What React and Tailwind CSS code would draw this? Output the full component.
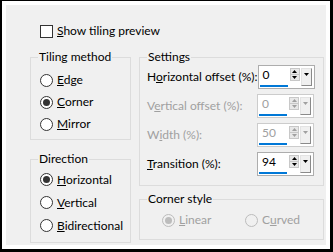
import React from "react";

const font = { fontFamily: 'Lato, "Noto Sans", sans-serif' };

function Radio({ checked, disabled }) {
  return (
    <span
      className={`flex items-center justify-center w-[13px] h-[13px] rounded-full border shrink-0 ${
        disabled ? "border-[#bcbcbc] bg-[#f0f0f0]" : "border-[#333333] bg-white"
      }`}
    >
      {checked && (
        <span
          className={`w-[7px] h-[7px] rounded-full ${disabled ? "bg-[#bcbcbc]" : "bg-[#333333]"}`}
        />
      )}
    </span>
  );
}

function RadioRow({ pre, acc, post, checked, disabled, className }) {
  return (
    <div className={`flex items-center gap-[4px] ${className || ""}`}>
      <Radio checked={checked} disabled={disabled} />
      <span className={`whitespace-nowrap ${disabled ? "text-[#a0a0a0]" : "text-black"}`}>
        {pre}
        <u className="underline-offset-[1px]">{acc}</u>
        {post}
      </span>
    </div>
  );
}

function Group({ title, className, children }) {
  return (
    <div className={`relative border border-[#dcdcdc] ${className}`}>
      <span className="absolute left-[7px] top-[-9px] bg-[#f0f0f0] px-[1px] leading-[16px] text-black whitespace-nowrap">
        {title}
      </span>
      {children}
    </div>
  );
}

function Spin({ value, disabled }) {
  const arrow = disabled ? "#a0a0a0" : "#000000";
  return (
    <div
      className={`w-[57px] h-[24px] border flex items-stretch shrink-0 ${
        disabled ? "border-[#cccccc] bg-white" : "border-[#adadad] bg-white"
      }`}
    >
      <div className="w-[29px] flex flex-col pl-[1px]">
        <div
          className={`flex-1 flex items-center pl-[3px] leading-[14px] ${
            disabled ? "text-[#a0a0a0]" : "text-black"
          }`}
        >
          {value}
        </div>
        <div className="h-[2px] bg-[#0078d7] mb-[1px]" />
      </div>
      <div className="w-[10px] ml-[2px] mt-[2px] h-[13px] flex flex-col border border-[#c8c8c8] bg-[#e8e8e8]">
        <div className="flex-1 flex items-center justify-center border-b border-[#c8c8c8]">
          <svg width="5" height="3" viewBox="0 0 5 3">
            <polygon points="2.5,0 5,3 0,3" fill={arrow} />
          </svg>
        </div>
        <div className="flex-1 flex items-center justify-center">
          <svg width="5" height="3" viewBox="0 0 5 3">
            <polygon points="0,0 5,0 2.5,3" fill={arrow} />
          </svg>
        </div>
      </div>
      <div className="w-[11px] ml-[1px] mt-[2px] mb-[2px] flex justify-center pt-[4px] border-t border-l border-[#e3e3e3] border-r border-b border-r-[#8a8a8a] border-b-[#8a8a8a] bg-[#f0f0f0]">
        <svg width="5" height="3" viewBox="0 0 5 3">
          <polygon points="0,0 5,0 2.5,3" fill={arrow} />
        </svg>
      </div>
    </div>
  );
}

function SpinRow({ pre, acc, post, value, disabled }) {
  return (
    <div className="h-[29px] flex items-center justify-between">
      <span className={`whitespace-nowrap ${disabled ? "text-[#a0a0a0]" : "text-black"}`}>
        {pre}
        <u className="underline-offset-[1px]">{acc}</u>
        {post}
      </span>
      <Spin value={value} disabled={disabled} />
    </div>
  );
}

export default function App() {
  return (
    <div
      style={font}
      className="w-[333px] h-[252px] border-t border-l-2 border-r-[3px] border-b-[3px] border-black bg-white p-[4px] text-[12px] leading-[16px]"
    >
      <div className="w-full h-full bg-[#f0f0f0] pl-[24px] pt-[18px]">
        <div className="h-[16px] flex items-center gap-[4px] ml-[10px]">
          <span className="w-[13px] h-[13px] border border-[#333333] bg-white shrink-0" />
          <span className="whitespace-nowrap">
            <u className="underline-offset-[1px]">S</u>how tiling preview
          </span>
        </div>
        <div className="mt-[18px] flex gap-[8px]">
          <div className="w-[101px] flex flex-col">
            <Group title="Tiling method" className="pt-[11px] pb-[4px] pl-[9px]">
              <RadioRow className="h-[22px]" acc="E" post="dge" />
              <RadioRow className="h-[22px]" acc="C" post="orner" checked />
              <RadioRow className="h-[22px]" acc="M" post="irror" />
            </Group>
            <Group title="Direction" className="mt-[19px] pt-[8px] pb-[5px] pl-[9px]">
              <RadioRow className="h-[23px]" acc="H" post="orizontal" checked />
              <RadioRow className="h-[23px]" acc="V" post="ertical" />
              <RadioRow className="h-[23px]" acc="B" post="idirectional" />
            </Group>
          </div>
          <div className="w-[185px] flex flex-col">
            <Group title="Settings" className="pt-[4px] pb-[7px] pl-[7px] pr-[9px]">
              <SpinRow pre="H" acc="o" post="rizontal offset (%):" value="0" />
              <SpinRow pre="V" acc="e" post="rtical offset (%):" value="0" disabled />
              <SpinRow pre="W" acc="i" post="dth (%):" value="50" disabled />
              <SpinRow acc="T" post="ransition (%):" value="94" />
            </Group>
            <Group title="Corner style" className="mt-[13px] pt-[12px] pb-[11px] pl-[22px]">
              <div className="h-[16px] flex items-center">
                <RadioRow className="w-[83px]" acc="L" post="inear" checked disabled />
                <RadioRow pre="C" acc="u" post="rved" disabled />
              </div>
            </Group>
          </div>
        </div>
      </div>
    </div>
  );
}
